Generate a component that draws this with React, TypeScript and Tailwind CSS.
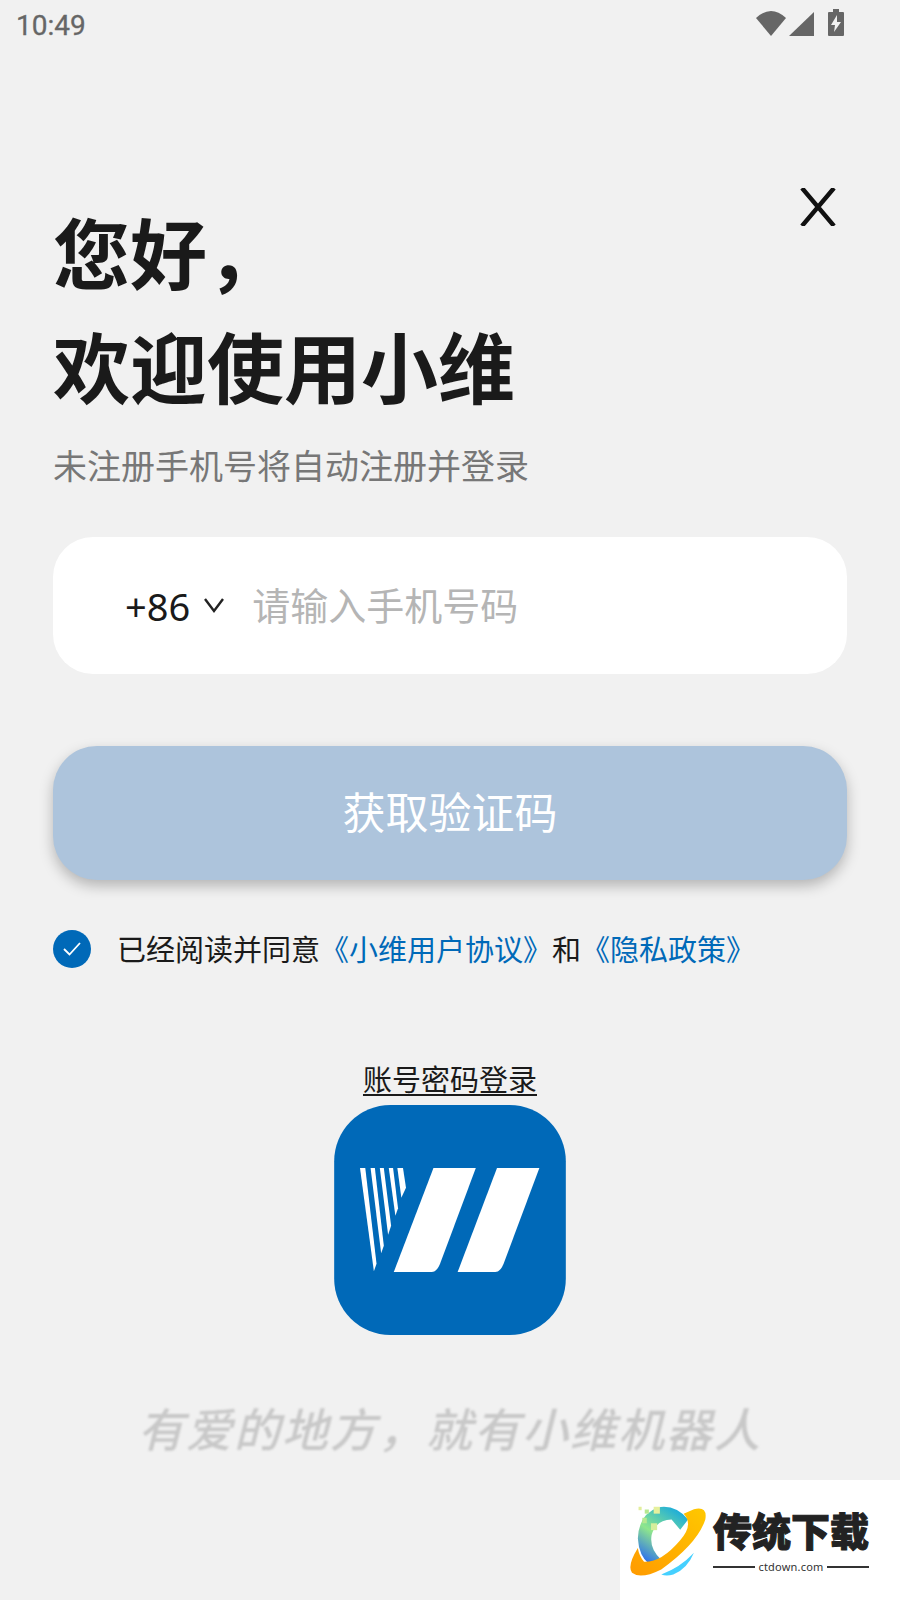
const cjk = "font-['Noto_Sans_CJK_SC','Noto_Sans',sans-serif]";

function StatusBar() {
  return (
    <div className="flex h-[50px] items-start justify-between pl-[16px] pr-[54px]">
      <span className="mt-[8px] font-['Roboto',sans-serif] text-[28px] leading-[36px] text-[#666666] [-webkit-text-stroke:0.3px_#666666]">10:49</span>
      <svg width="90" height="28" viewBox="0 0 90 28" className="mt-[9px]" fill="#666666">
        <path d="M0 9 Q15 -5 30 9 L15 27 Z" />
        <path d="M33 27 L58 3 V27 Z" />
        <path fillRule="evenodd" d="M77 3 V0 H83 V3 H87 Q88 3 88 4 V26 Q88 27 87 27 H73 Q72 27 72 26 V4 Q72 3 73 3 Z M81 6 L75 16 H79 L78 23 L85 13 H81 Z" />
      </svg>
    </div>
  );
}

function Logo() {
  return (
    <svg width="234" height="230" viewBox="40 40 700 695" className="mt-[5px]">
      <rect x="40" y="40" width="700" height="695" rx="170" fill="#0069b8" />
      <g fill="#ffffff">
        <path d="M118 230 H134 L168 520 L160 542 Z" />
        <path d="M150 230 H163 L190 465 L182 488 Z" />
        <path d="M178 230 H190 L212 405 L203 432 Z" />
        <path d="M205 230 H218 L233 352 L225 375 Z" />
        <path d="M231 230 H248 L257 290 L243 320 Z" />
        <path d="M340 230 H468 L360 520 Q350 545 335 545 H220 Z" />
        <path d="M532 230 H660 L552 520 Q542 545 527 545 H413 Z" />
      </g>
    </svg>
  );
}

function Watermark() {
  return (
    <div className="absolute bottom-0 right-0 flex h-[120px] w-[280px] items-start bg-white">
      <svg width="80" height="74" viewBox="60 100 225 215" className="ml-[9px] mt-[24px]">
        <defs>
          <linearGradient id="ringGrad" x1="0" y1="1" x2="1" y2="0">
            <stop offset="0" stopColor="#ff9a00" />
            <stop offset="1" stopColor="#ffc800" />
          </linearGradient>
          <linearGradient id="arcGrad" x1="0.8" y1="0" x2="0.2" y2="1">
            <stop offset="0" stopColor="#14a8e0" />
            <stop offset="0.55" stopColor="#8ee68c" />
            <stop offset="1" stopColor="#2a6cf0" />
          </linearGradient>
        </defs>
        <path d="M228 145 Q190 100 140 110 Q85 130 82 200 Q85 250 115 275 L150 262 Q115 230 122 190 Q135 145 180 145 L205 175 Z" fill="url(#arcGrad)" />
        <path d="M245 115 Q285 105 278 145 Q255 215 150 290 Q90 320 65 300 Q50 280 82 228 Q85 250 100 268 Q150 270 205 205 Q245 160 215 128 Z" fill="url(#ringGrad)" />
        <path d="M245 242 Q225 290 185 305 Q165 310 150 305 Q205 285 245 242 Z" fill="#45d0ff" />
        <rect x="84" y="108" width="9" height="10" fill="#e2ee9c" />
        <rect x="102" y="116" width="12" height="12" fill="#b6e890" />
        <rect x="128" y="108" width="18" height="20" fill="#e6f09c" />
        <rect x="95" y="140" width="13" height="16" fill="#b6e890" />
        <rect x="120" y="156" width="18" height="20" fill="#d6ee9c" />
      </svg>
      <div className="ml-[4px] mt-[26px] flex w-[156px] flex-col items-center">
        <span className={`${cjk} text-[39px] font-black leading-[46px] whitespace-nowrap text-[#222222] [-webkit-text-stroke:1px_#222222]`}>传统下载</span>
        <div className="mt-[8px] flex w-full items-center gap-[3px]">
          <div className="h-[2px] flex-1 bg-[#333333]" />
          <span className="font-['Noto_Sans',sans-serif] text-[11px] leading-[14px] tracking-[0.2px] text-[#333333]">ctdown.com</span>
          <div className="h-[2px] flex-1 bg-[#333333]" />
        </div>
      </div>
    </div>
  );
}

export default function App() {
  return (
    <div className={`${cjk} relative h-[1600px] w-[900px] overflow-hidden bg-[#f1f1f1]`}>
      <StatusBar />
      <main className="px-[53px]">
        <div className="mt-[138px] flex items-start justify-between">
          <h1 className="mt-[6px] text-[77px] font-bold leading-[114px] text-[#1a1a1a]">
            您好，
            <br />
            欢迎使用小维
          </h1>
          <button className="mr-[11px]">
            <svg width="36" height="38" viewBox="0 0 36 38" fill="none" stroke="#111111" strokeWidth="4.4">
              <path d="M2 0 L34 38 M34 0 L2 38" />
            </svg>
          </button>
        </div>
        <p className="mt-[18px] text-[34px] leading-[50px] text-[#777777]">未注册手机号将自动注册并登录</p>

        <div className="mt-[47px] flex h-[137px] items-center rounded-[40px] bg-white pl-[72px]">
          <span className="mt-[2px] font-['Noto_Sans',sans-serif] text-[38px] text-[#1a1a1a]">+86</span>
          <svg width="22" height="16" viewBox="0 0 22 16" fill="none" stroke="#222222" strokeWidth="2.4" className="ml-[13px] mt-[-2px]">
            <path d="M2 2 L11 14 L20 2" />
          </svg>
          <span className="ml-[27px] mt-[-4px] text-[38px] text-[#b5b5b5]">请输入手机号码</span>
        </div>

        <button className="mt-[72px] flex h-[134px] w-full items-center justify-center rounded-[44px] bg-[#adc4dc] pb-[6px] text-[43px] text-white shadow-[0_6px_14px_rgba(0,0,0,0.25)]">
          获取验证码
        </button>

        <div className="mt-[50px] flex items-center">
          <span className="flex h-[38px] w-[38px] items-center justify-center rounded-full bg-[#0069b8]">
            <svg width="18" height="14" viewBox="0 0 18 14" fill="none" stroke="#ffffff" strokeWidth="1.8">
              <path d="M1 7 L6.5 12.5 L17 1" />
            </svg>
          </span>
          <p className="ml-[26px] mt-[-2px] whitespace-nowrap text-[29px] leading-[40px] text-[#1a1a1a]">
            已经阅读并同意
            <span className="text-[#0069b8]">《小维用户协议》</span>
            和
            <span className="text-[#0069b8]">《隐私政策》</span>
          </p>
        </div>

        <div className="mt-[88px] flex flex-col items-center">
          <a className="text-[29px] leading-[44px] text-[#1a1a1a] underline decoration-[1.5px] underline-offset-[3px]">账号密码登录</a>
          <Logo />
          <p className="mt-[64px] whitespace-nowrap text-[46px] font-medium italic leading-[56px] tracking-[2px] text-[#c8c8c8] blur-[1px]">
            有爱的地方，就有小维机器人
          </p>
        </div>
      </main>
      <Watermark />
    </div>
  );
}
